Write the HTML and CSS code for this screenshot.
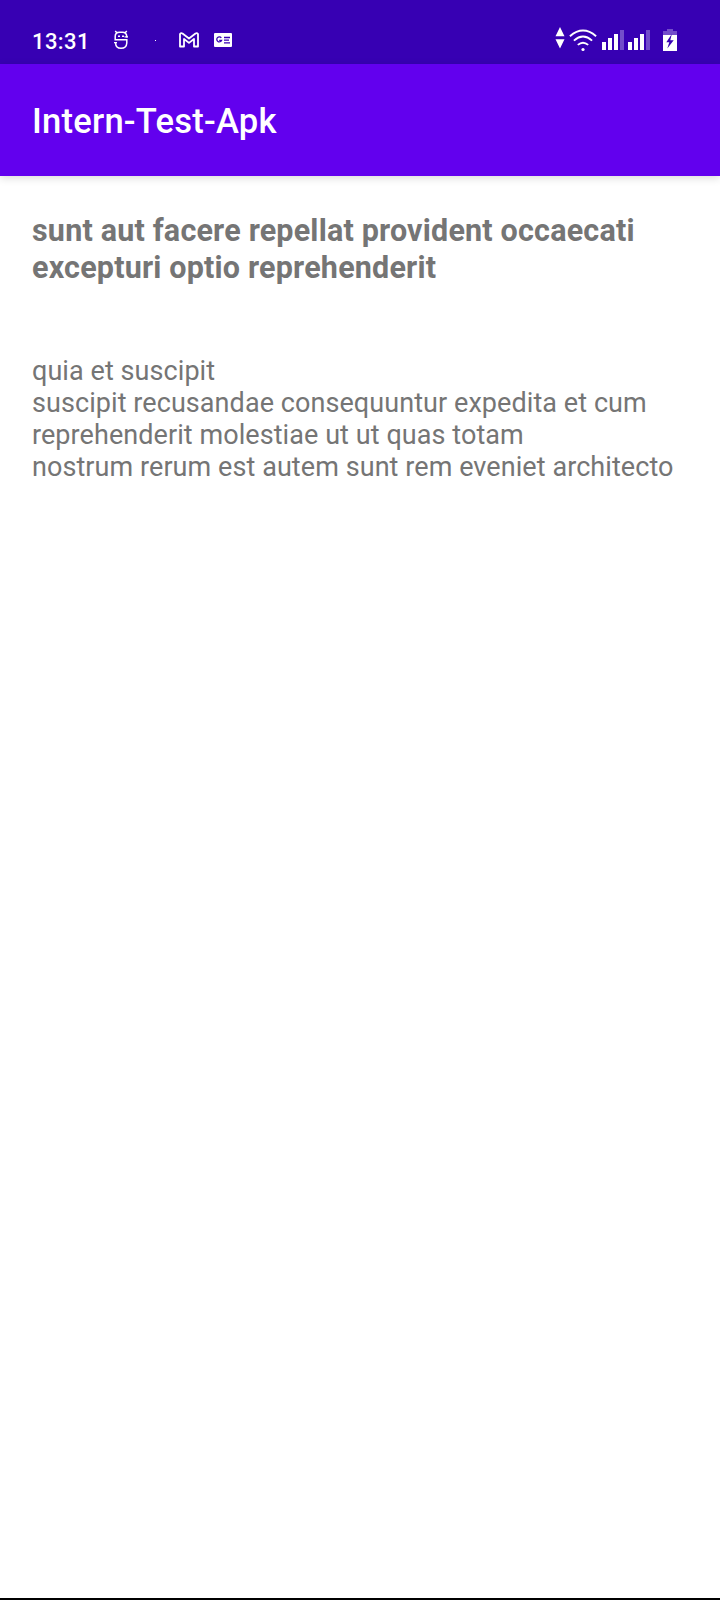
FILE: index.html
```html
<!DOCTYPE html>
<html lang="en">
<head>
<meta charset="utf-8">
<title>Intern-Test-Apk</title>
<link rel="stylesheet" href="styles.css">
</head>
<body>
<div class="screen">
  <div class="status-bar">
    <span class="clock">13:31</span>
    <svg class="icon-s" width="16" height="20" viewBox="0 0 16 20" fill="none" stroke="#fff" stroke-width="1.5">
      <path d="M2.200 1l2 2M13.800 1l-2 2M13.800 7.600V6.500Q13.500 2.200 9.500 2.200H6.500Q2.200 2.200 2.200 6.500V9.800H13.800V13Q13.500 18.300 8 18.300Q2.800 18.300 2.500 12.700"/>
      <path d="M1 12.700H4M11.500 6.800H15" stroke-width="1.200"/>
      <path d="M5 6.200h2M9 6.200h2" stroke-width="1.500"/>
    </svg>
    <span class="dot"></span>
    <svg class="icon-mail" width="20" height="16" viewBox="0 0 20 16" fill="none" stroke="#fff" stroke-width="1.800" stroke-linejoin="round">
      <path d="M1 14.500V2Q2 .700 3.500 1.500L10 6.500L16.500 1.500Q18 .700 19 2V14.500H15V7L10 10.900L5 7V14.500Z"/>
    </svg>
    <svg class="icon-news" width="18" height="14" viewBox="0 0 18 14">
      <rect width="18" height="14" rx="1" fill="#fff"/>
      <path d="M7.300 4.900A2.500 2.500 0 1 0 7.600 7.300H5.200M10 4.500h6M10 7.200h5M10 9.900h6" fill="none" stroke="#3700b3" stroke-width="1.300"/>
    </svg>
    <div class="system-icons">
      <svg class="icon-data" width="10" height="22" viewBox="0 0 10 22" fill="#fff"><path d="M5 0L9.500 9.200H.500ZM.500 12.200H9.500L5 21.500Z"/></svg>
      <svg class="icon-wifi" width="28" height="23" viewBox="0 0 28 23" fill="none" stroke="#fff" stroke-width="1.900">
        <path d="M.900 7.200Q14-4.200 27.100 7.200M4.900 11.600Q14 3.600 23.100 11.600M8.800 15.900Q14 11.400 19.200 15.900"/>
        <circle cx="14" cy="20.500" r="1.600" fill="#fff" stroke="none"/>
      </svg>
      <svg class="icon-signal" width="22" height="20" viewBox="0 0 22 20" fill="#fff"><path d="M0 12h4v8H0zM6 8h4v12H6zM12 4h4v16h-4z"/><path d="M18 0h4v20h-4z" opacity=".3"/></svg>
      <svg class="icon-signal" width="22" height="20" viewBox="0 0 22 20" fill="#fff"><path d="M0 12h4v8H0zM6 8h4v12H6zM12 4h4v16h-4z"/><path d="M18 0h4v20h-4z" opacity=".3"/></svg>
      <svg class="icon-battery" width="14" height="22" viewBox="0 0 14 22" fill="#fff">
        <path d="M4 0h6v2h4v4H0V2h4z" opacity=".3"/><path d="M0 6h14v16H0z"/>
        <path d="M8.800 5L3.300 13.200H6.300L4.300 19.500L10.700 11.300H7.300Z" fill="#3700b3"/>
      </svg>
    </div>
  </div>
  <header class="app-bar"><h1 class="app-title">Intern-Test-Apk</h1></header>
  <main class="content">
    <h2 class="post-title">sunt aut facere repellat provident occaecati<br>excepturi optio reprehenderit</h2>
    <p class="post-body">quia et suscipit<br>suscipit recusandae consequuntur expedita et cum<br>reprehenderit molestiae ut ut quas totam<br>nostrum rerum est autem sunt rem eveniet architecto</p>
  </main>
</div>
</body>
</html>
```
FILE: styles.css
```css
* { box-sizing: border-box; }
body { margin: 0; font-family: Roboto, sans-serif; background: #fff; }
.screen { display: flex; flex-direction: column; width: 720px; height: 1600px; border-bottom: 2px solid #000; }
.status-bar { display: flex; align-items: flex-start; height: 64px; padding: 0 43px 0 32px; background: #3700b3; color: #fff; flex: none; }
.clock { width: 57px; margin-top: 29px; font-size: 22px; line-height: 26px; font-weight: 500; letter-spacing: .4px; white-space: nowrap; }
.icon-s { margin: 30px 0 0 24px; }
.dot { width: 1px; height: 1px; margin: 40px 0 0 26px; background: #fff; }
.icon-mail { margin: 32px 0 0 23px; }
.icon-news { margin: 33px 0 0 15px; }
.system-icons { display: flex; align-items: flex-start; margin-left: auto; }
.icon-data { margin-top: 27px; }
.icon-wifi { margin: 29px 1px 0 4px; }
.icon-signal { margin: 30px 0 0 4px; }
.icon-battery { margin: 29px 0 0 13px; }
.app-bar { display: flex; align-items: center; height: 112px; padding: 0 32px; background: #6200ee; color: #fff; box-shadow: 0 2px 8px rgba(0, 0, 0, .15); flex: none; }
.app-title { margin: 2px 0 0; font-size: 34.6px; line-height: 42px; font-weight: 500; letter-spacing: .22px; }
.content { padding: 36px 32px 0; color: #757575; }
.post-title { margin: 0; font-size: 30.5px; line-height: 37px; font-weight: 700; letter-spacing: .19px; white-space: nowrap; }
.post-body { margin: 69px 0 0; font-size: 27px; line-height: 32px; letter-spacing: .07px; white-space: nowrap; }
```
